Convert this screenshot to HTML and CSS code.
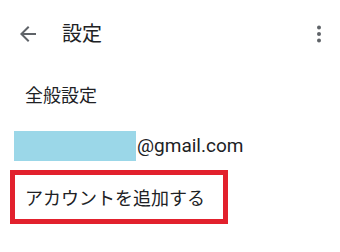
FILE: index.html
```html
<!DOCTYPE html>
<html lang="ja">
<head>
<meta charset="utf-8">
<link rel="stylesheet" href="styles.css">
</head>
<body>
<div class="screen">
  <header class="toolbar">
    <svg class="back" width="24" height="24" viewBox="0 0 24 24"><path d="M20 11H7.83l5.59-5.59L12 4l-8 8 8 8 1.41-1.41L7.83 13H20v-2z" fill="#5f6368"/></svg>
    <div class="title">設定</div>
    <svg class="more" width="8" height="20" viewBox="0 0 8 20"><circle cx="4" cy="3.5" r="2" fill="#5f6368"/><circle cx="4" cy="10" r="2" fill="#5f6368"/><circle cx="4" cy="16.5" r="2" fill="#5f6368"/></svg>
  </header>
  <div class="item general">全般設定</div>
  <div class="item account">
    <span class="mask"></span><span class="mail">@gmail.com</span>
  </div>
  <div class="add">アカウントを追加する</div>
</div>
</body>
</html>
```
FILE: styles.css
```css
html, body {
  margin: 0;
  padding: 0;
  background: #ffffff;
}
.screen {
  width: 340px;
  height: 252px;
  overflow: hidden;
  font-family: Roboto, "Noto Sans CJK JP", sans-serif;
  color: #202124;
}
.toolbar {
  height: 67px;
  display: flex;
  align-items: center;
  box-sizing: border-box;
  padding-left: 16px;
  padding-right: 17px;
}
.back {
  display: block;
  margin-top: 1px;
}
.title {
  margin-left: 22px;
  font-size: 20px;
  line-height: 24px;
  flex: 1;
}
.more {
  display: block;
}
.item {
  display: flex;
  align-items: center;
  font-size: 18px;
}
.general {
  height: 56px;
  box-sizing: border-box;
  padding-left: 25px;
  padding-bottom: 3px;
  font-family: "Noto Sans CJK JP", sans-serif;
}
.account {
  height: 46px;
  padding-left: 14px;
}
.mask {
  display: block;
  width: 122px;
  height: 30px;
  background: #9bd7e8;
}
.mail {
  font-size: 19px;
  margin-left: 1px;
  margin-top: -1px;
}
.add {
  margin-top: 1px;
  margin-left: 10px;
  width: 218px;
  height: 54px;
  box-sizing: border-box;
  border: 5px solid #e2212d;
  padding-left: 10px;
  display: flex;
  align-items: center;
  font-family: "Noto Sans CJK JP", sans-serif;
  font-size: 18px;
}
```
